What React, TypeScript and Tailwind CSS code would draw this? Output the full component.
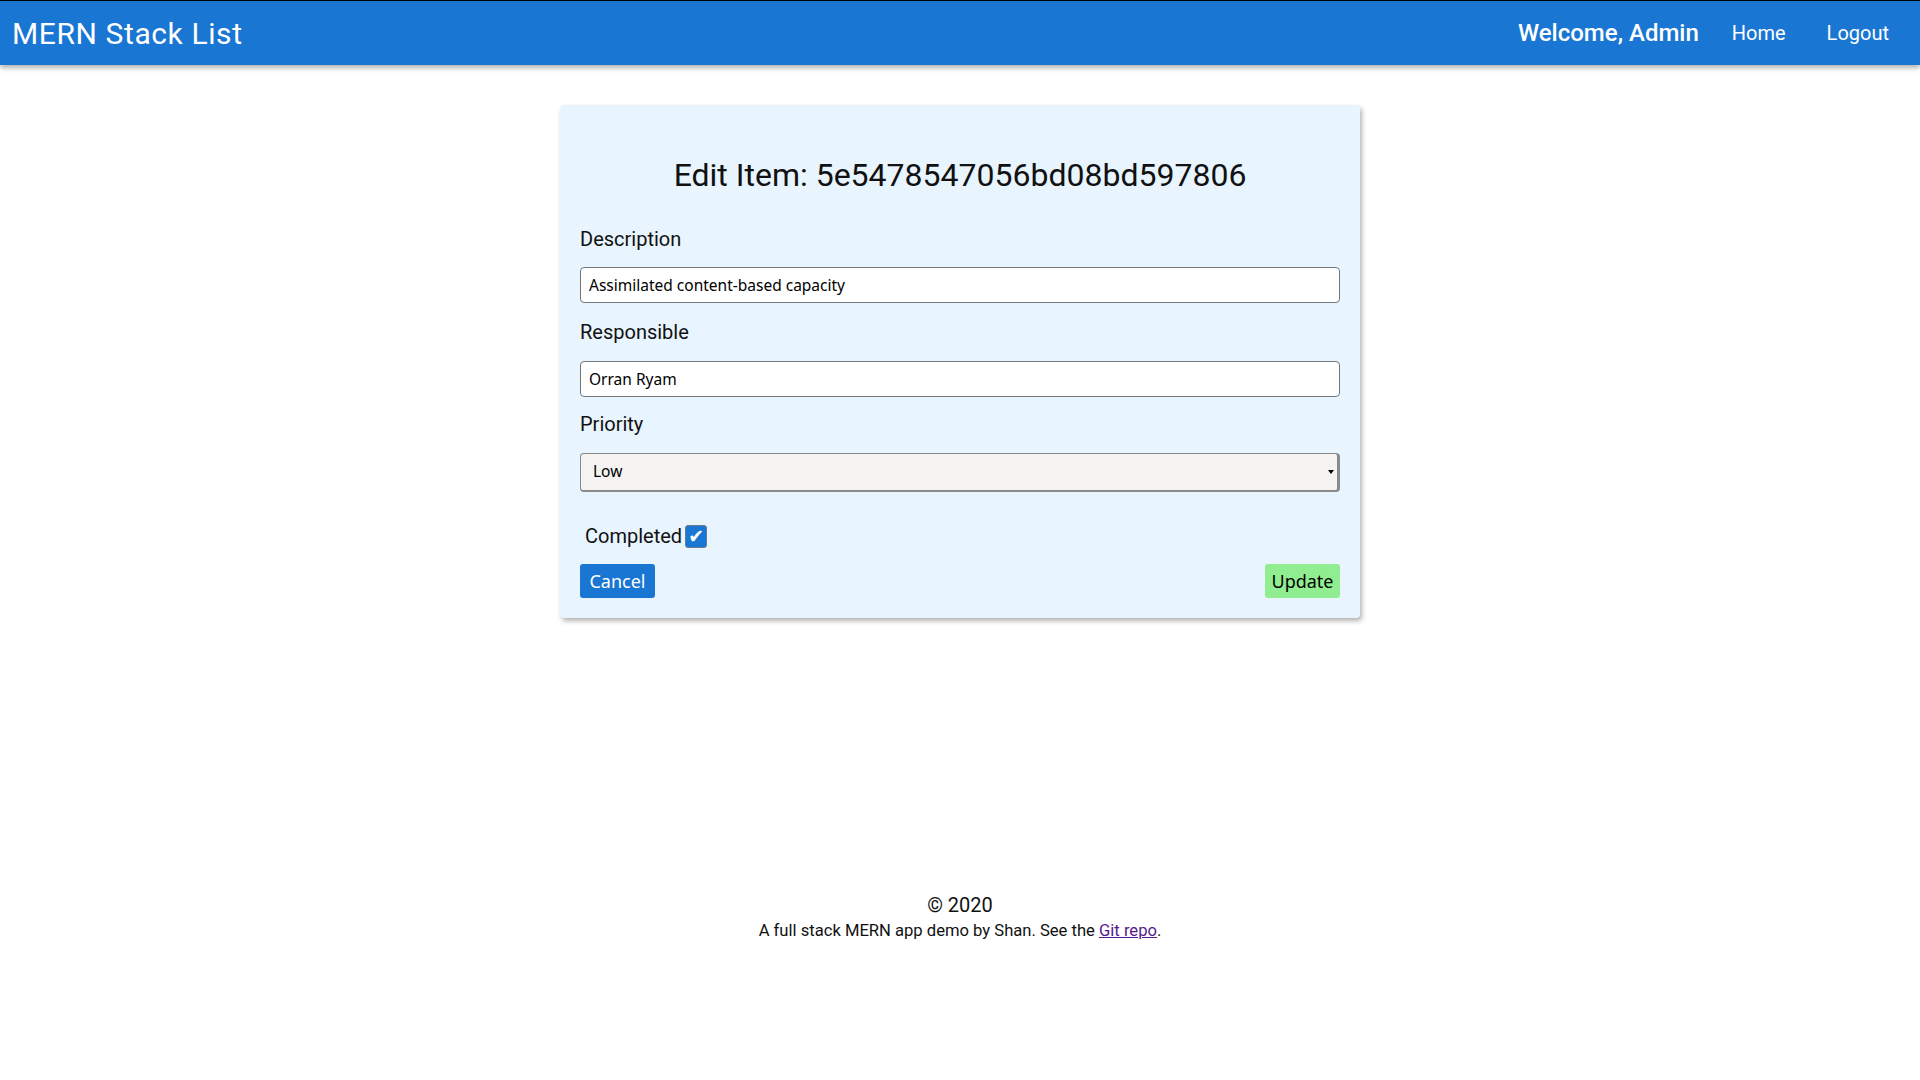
import React from "react";

export default function App() {
  return (
    <div className="min-h-screen bg-white font-['Roboto',sans-serif] text-[#111]">
      {/* Top bar */}
      <header className="flex h-[65px] items-center justify-between border-t border-black bg-[#1976d2] pl-[12px] pr-[31px] text-white shadow-[0_3px_5px_rgba(0,0,0,0.3)]">
        <span className="text-[30px] tracking-[0.6px]">MERN Stack List</span>
        <nav className="flex items-center">
          <span className="mr-[33px] text-[24px] font-medium">Welcome, Admin</span>
          <a className="mr-[41px] text-[20px]">Home</a>
          <a className="text-[20px]">Logout</a>
        </nav>
      </header>

      {/* Edit card */}
      <main className="flex justify-center pt-[40px]">
        <form className="w-[800px] rounded-[4px] bg-[#e8f4fe] px-[20px] pt-[52px] pb-[20px] shadow-[2px_3px_5px_rgba(0,0,0,0.3)]">
          <h2 className="mb-[31px] text-center text-[32px] leading-[36px]">
            Edit Item: 5e5478547056bd08bd597806
          </h2>

          <div className="mb-[14px]">
            <label className="mb-[13px] block text-[20px] leading-[30px]">Description</label>
            <input
              defaultValue="Assimilated content-based capacity"
              className="block h-[36px] w-full rounded-[4px] border border-[#767676] bg-white px-[8px] font-['Noto_Sans',sans-serif] text-[15.5px] text-black outline-none"
            />
          </div>

          <div className="mb-[12px]">
            <label className="mb-[14px] block text-[20px] leading-[30px]">Responsible</label>
            <input
              defaultValue="Orran Ryam"
              className="block h-[36px] w-full rounded-[4px] border border-[#767676] bg-white px-[8px] font-['Noto_Sans',sans-serif] text-[15.5px] text-black outline-none"
            />
          </div>

          <div className="mb-[29px]">
            <label className="mb-[14px] block text-[20px] leading-[30px]">Priority</label>
            <div className="relative">
              <select
                defaultValue="Low"
                className="block h-[39px] w-full appearance-none rounded-[4px] border border-r-[3px] border-b-[2px] border-[#8a8a8a] bg-[#f4f3f1] px-[12px] font-['Noto_Sans',sans-serif] text-[15.5px] text-black outline-none"
              >
                <option>Low</option>
                <option>Medium</option>
                <option>High</option>
              </select>
              <span className="pointer-events-none absolute right-[6px] top-[17px] h-0 w-0 border-x-[3px] border-t-[4px] border-x-transparent border-t-black" />
            </div>
          </div>

          <div className="mb-[13px] flex items-center pl-[5px]">
            <span className="text-[20px] leading-[30px]">Completed</span>
            <span className="ml-[3px] flex h-[23px] w-[22px] items-center justify-center rounded-[3px] border border-[#6b7a8c] bg-[#1976d2] font-['DejaVu_Sans',sans-serif] text-[19px] leading-none text-white">
              ✔
            </span>
          </div>

          <div className="flex items-center justify-between">
            <button
              type="button"
              className="h-[34px] w-[75px] rounded-[3px] bg-[#1976d2] font-['Noto_Sans',sans-serif] text-[18px] text-white"
            >
              Cancel
            </button>
            <button
              type="button"
              className="h-[34px] w-[75px] rounded-[3px] bg-[#90ee90] font-['Noto_Sans',sans-serif] text-[18px] text-black"
            >
              Update
            </button>
          </div>
        </form>
      </main>

      {/* Footer */}
      <footer className="mt-[275px] text-center">
        <p className="text-[20px] leading-[24px]">© 2020</p>
        <p className="text-[16.6px] leading-[28px]">
          A full stack MERN app demo by Shan. See the{" "}
          <a className="text-[#551a8b] underline">Git repo</a>.
        </p>
      </footer>
    </div>
  );
}
